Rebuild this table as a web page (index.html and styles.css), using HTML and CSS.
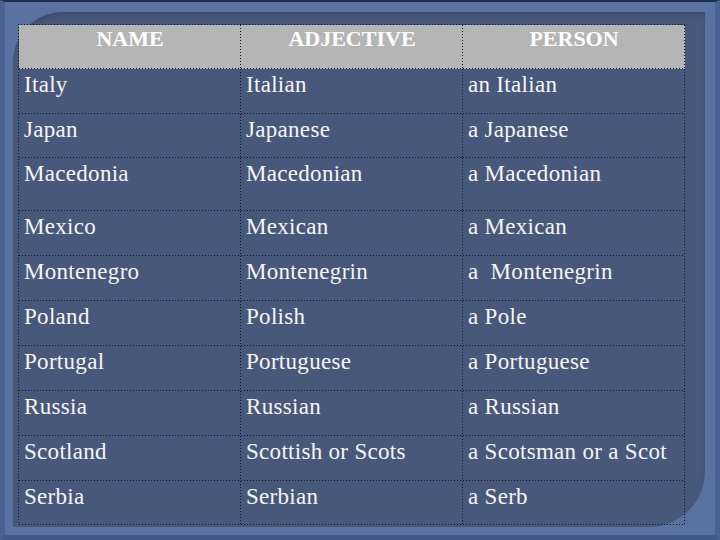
FILE: index.html
```html
<!DOCTYPE html>
<html lang="en">
<head>
<meta charset="utf-8">
<title>Nationalities</title>
<link rel="stylesheet" href="styles.css">
</head>
<body>
<div class="page">
  <div class="panel">
    <div class="grid" role="table">
      <div class="cell head" role="columnheader">NAME</div>
      <div class="cell head" role="columnheader">ADJECTIVE</div>
      <div class="cell head" role="columnheader">PERSON</div>

      <div class="cell r45">Italy</div><div class="cell r45">Italian</div><div class="cell r45">an Italian</div>
      <div class="cell r44">Japan</div><div class="cell r44">Japanese</div><div class="cell r44">a Japanese</div>
      <div class="cell r53">Macedonia</div><div class="cell r53">Macedonian</div><div class="cell r53">a Macedonian</div>
      <div class="cell r45">Mexico</div><div class="cell r45">Mexican</div><div class="cell r45">a Mexican</div>
      <div class="cell r45">Montenegro</div><div class="cell r45">Montenegrin</div><div class="cell r45 pre">a  Montenegrin</div>
      <div class="cell r45">Poland</div><div class="cell r45">Polish</div><div class="cell r45">a Pole</div>
      <div class="cell r45">Portugal</div><div class="cell r45">Portuguese</div><div class="cell r45">a Portuguese</div>
      <div class="cell r45">Russia</div><div class="cell r45">Russian</div><div class="cell r45">a Russian</div>
      <div class="cell r45">Scotland</div><div class="cell r45">Scottish or Scots</div><div class="cell r45">a Scotsman or a Scot</div>
      <div class="cell r44">Serbia</div><div class="cell r44">Serbian</div><div class="cell r44">a Serb</div>
    </div>
  </div>
</div>
</body>
</html>
```

FILE: styles.css
```css
html, body {
  margin: 0;
  padding: 0;
  background: #2a3a60;
}

.page {
  box-sizing: border-box;
  width: 720px;
  height: 540px;
  background: #5a72a2;
  border-top: 2px solid #1f2c4c;
  border-left: 5px solid #4b6192;
  border-right: 5px solid #4b6192;
  border-bottom: 5px solid #44598a;
  padding: 10px 10px 8px 8px;
}

.panel {
  box-sizing: border-box;
  width: 692px;
  height: 515px;
  background: #48587b;
  border-radius: 50px 0 56px 0;
  padding: 12px 0 0 5px;
  box-shadow: inset 0 4px 6px -3px rgba(20, 30, 55, 0.35);
}

.grid {
  display: grid;
  grid-template-columns: 222px 222px 222px;
  width: 667px;
  box-sizing: border-box;
  padding: 1px 0 0 1px;
  background-image:
    linear-gradient(to bottom, #0e1322 1px, transparent 1px),
    linear-gradient(to right, #0e1322 1px, transparent 1px);
  background-size: 1px 3px, 3px 1px;
  background-position: left top, left top;
  background-repeat: repeat-y, repeat-x;
  font-family: "Liberation Serif", "Times New Roman", serif;
  color: #f5f5f2;
}

.cell {
  box-sizing: border-box;
  background-image:
    linear-gradient(to bottom, #0e1322 1px, transparent 1px),
    linear-gradient(to right, #0e1322 1px, transparent 1px);
  background-size: 1px 3px, 3px 1px;
  background-position: right top, left bottom;
  background-repeat: repeat-y, repeat-x;
  font-size: 23px;
  line-height: 26px;
  letter-spacing: 0.3px;
  padding: 3px 0 0 5px;
  white-space: nowrap;
}

.pre {
  white-space: pre;
}

.head {
  height: 44px;
  background-color: #b5b5b5;
  color: #ffffff;
  font-weight: bold;
  font-size: 22px;
  line-height: 25px;
  letter-spacing: 0;
  text-align: center;
  padding: 1px 0 0 0;
}

.r45 { height: 45px; }
.r44 { height: 44px; }
.r53 { height: 53px; }
```
